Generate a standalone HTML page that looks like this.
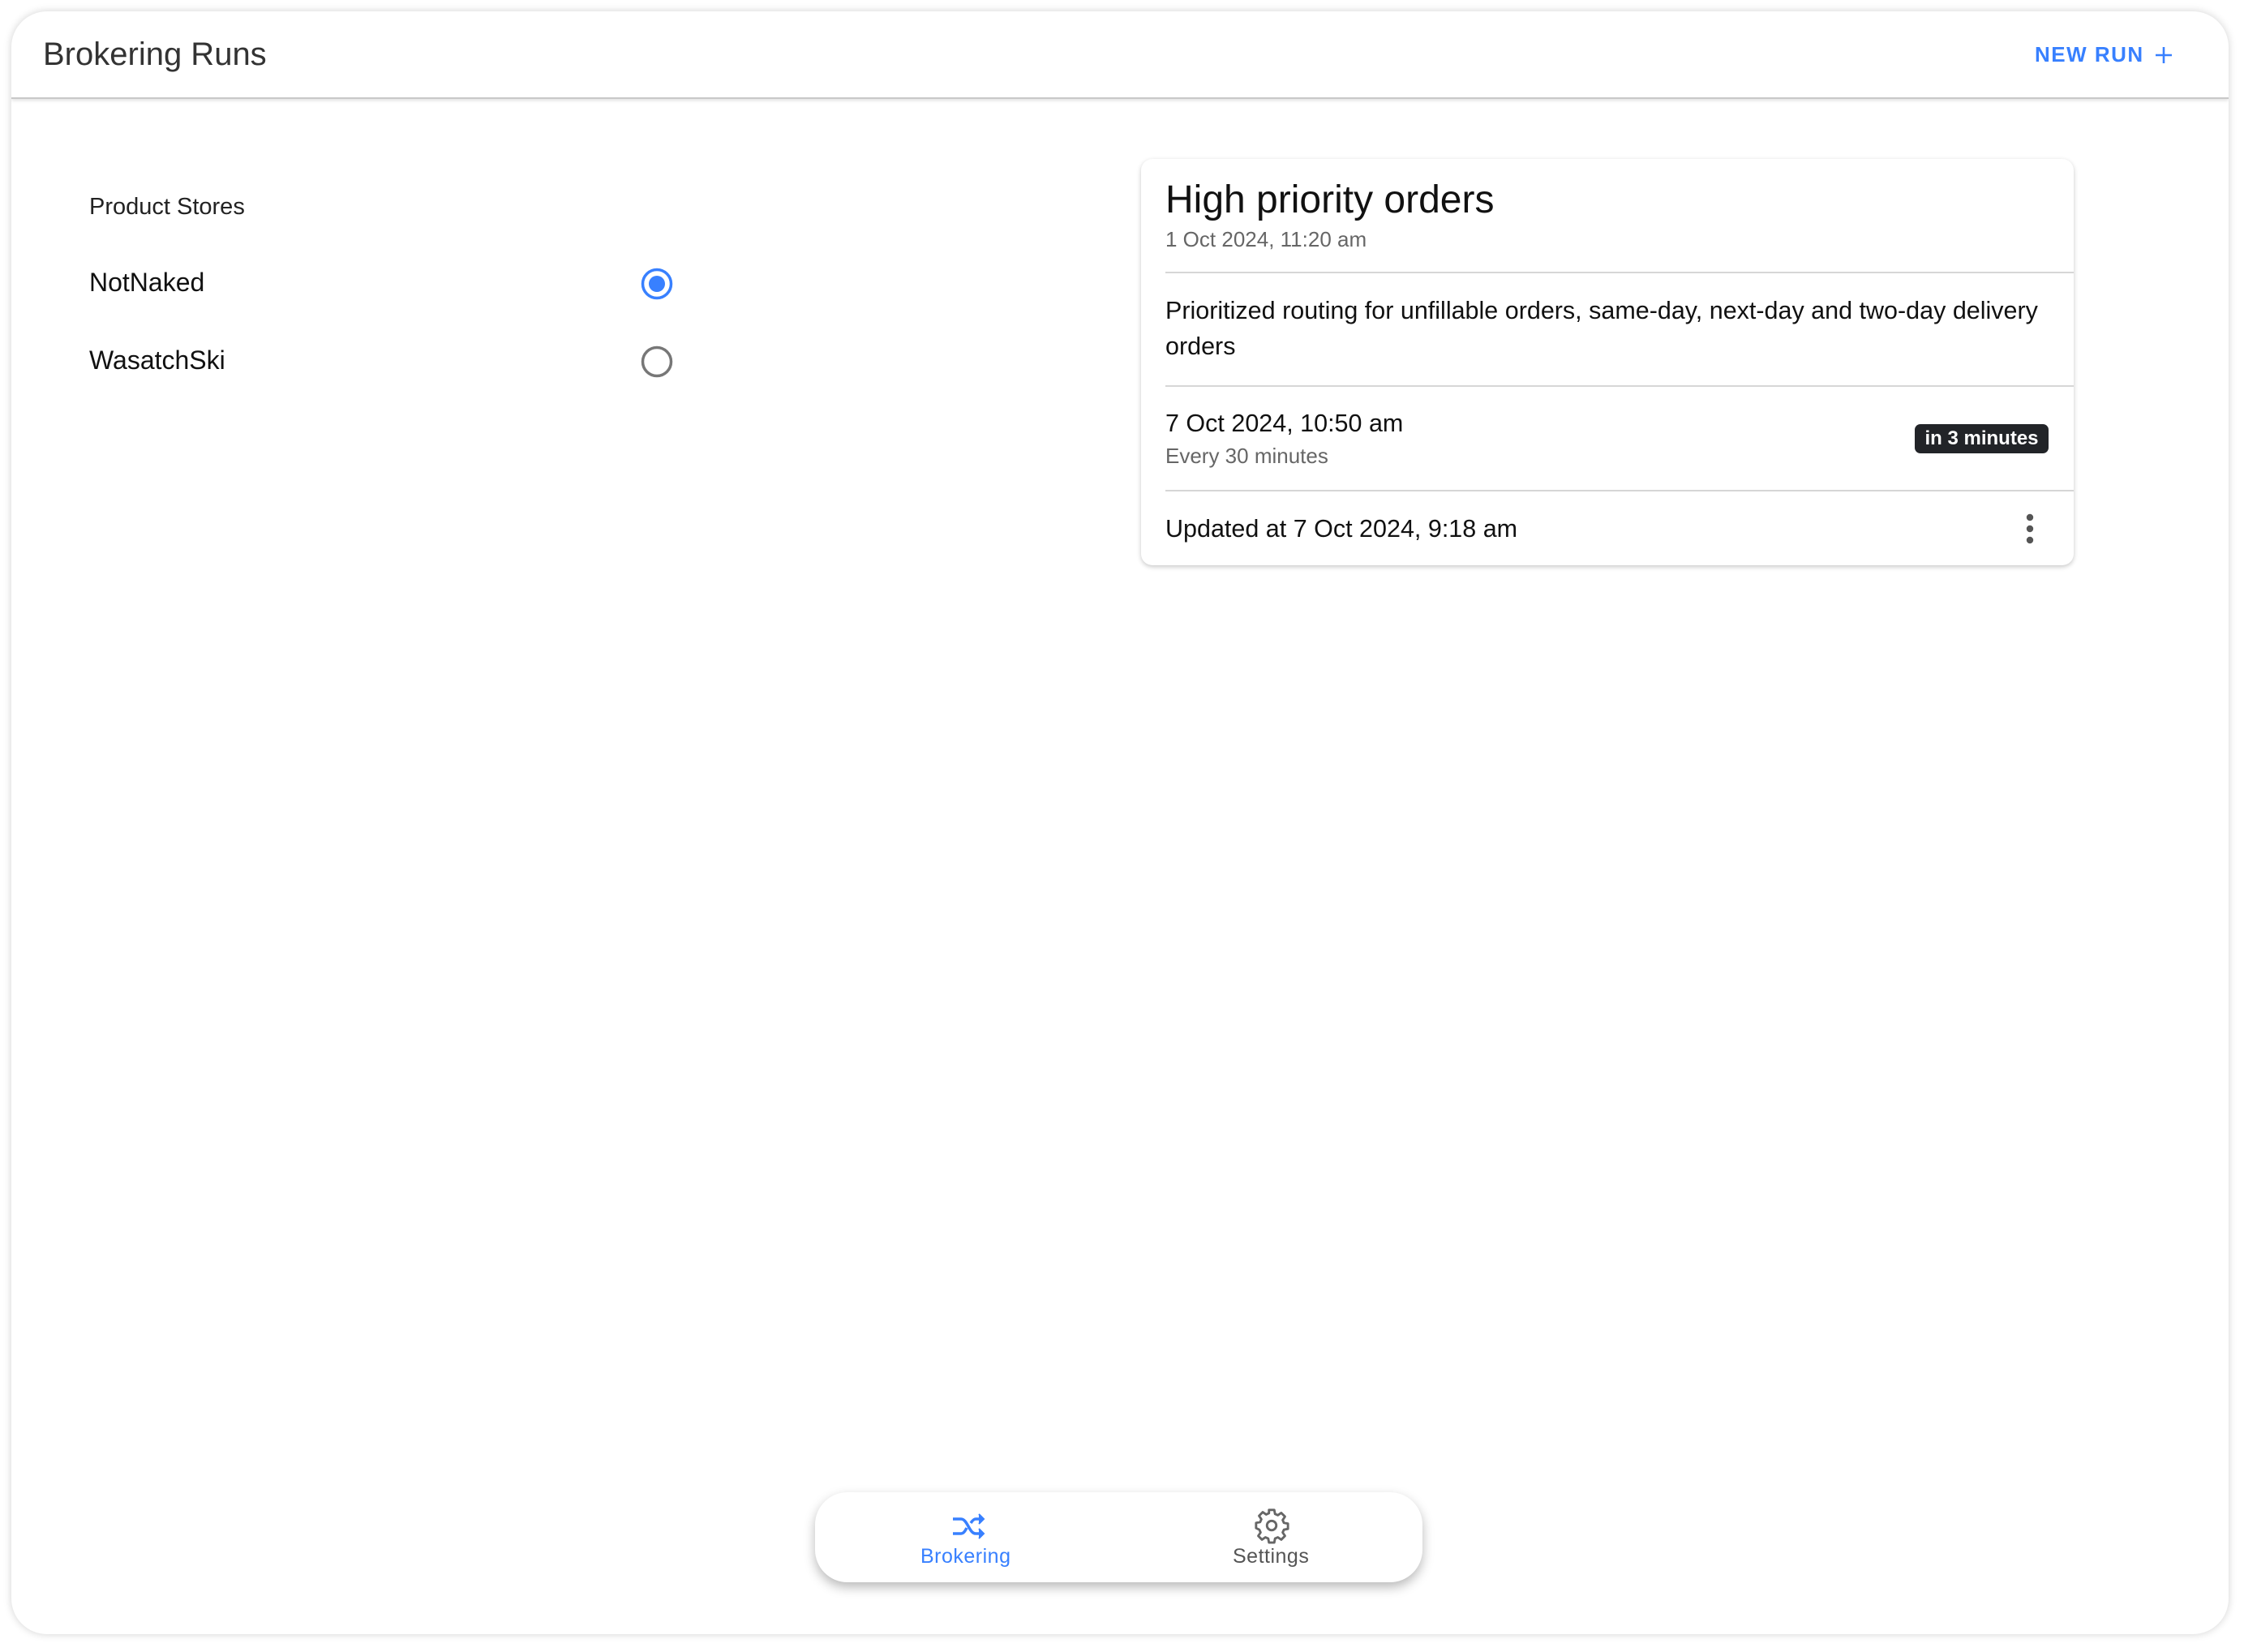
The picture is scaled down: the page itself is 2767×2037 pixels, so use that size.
<!DOCTYPE html>
<html><head><meta charset="utf-8"><style>
*{box-sizing:border-box;margin:0;padding:0}
body{width:2767px;height:2037px;background:#fff;font-family:"Liberation Sans",sans-serif;position:relative;overflow:hidden}
.frame{position:absolute;left:14px;top:14px;width:2734px;height:2001px;border-radius:44px;background:#fff;box-shadow:0 0 10px rgba(0,0,0,.18);overflow:hidden}
.hdr{position:absolute;left:0;top:0;width:100%;height:108px;border-bottom:2px solid #c8c8c8;box-shadow:0 2px 4px rgba(0,0,0,.12)}
.t{position:absolute;white-space:nowrap}
.card{position:absolute;left:1393px;top:182px;width:1150px;height:501px;border-radius:14px;background:#fff;box-shadow:0 2px 6px rgba(0,0,0,.22)}
.div{position:absolute;left:30px;right:0;height:2px;background:#d6d6d6}
.tab{position:absolute;left:991px;top:1826px;width:749px;height:111px;border-radius:40px;background:#fff;box-shadow:0 6px 14px rgba(0,0,0,.28)}
</style></head><body>
<div class="frame">
 <div class="hdr">
  <div class="t" style="left:39px;top:31px;font-size:40px;color:#333">Brokering Runs</div>
  <div class="t" style="left:2495px;top:38px;font-size:26px;color:#3880ff;font-weight:bold;letter-spacing:1.5px">NEW RUN</div>
  <svg style="position:absolute;left:2641px;top:41px" width="26" height="26" viewBox="0 0 26 26"><path d="M13 3v20M3 13h20" stroke="#3880ff" stroke-width="2.6"/></svg>
 </div>
 <div class="t" style="left:96px;top:225px;font-size:29px;color:#222">Product Stores</div>
 <div class="t" style="left:96px;top:316px;font-size:32px;color:#111">NotNaked</div>
 <div class="t" style="left:96px;top:412px;font-size:32px;color:#111">WasatchSki</div>
 <svg style="position:absolute;left:776px;top:316px" width="40" height="40"><circle cx="20" cy="20" r="17.5" fill="none" stroke="#3880ff" stroke-width="3.5"/><circle cx="20" cy="20" r="10" fill="#3880ff"/></svg>
 <svg style="position:absolute;left:776px;top:412px" width="40" height="40"><circle cx="20" cy="20" r="17.5" fill="none" stroke="#777" stroke-width="3.5"/></svg>

 <div class="card">
  <div class="t" style="left:30px;top:23px;font-size:48px;color:#111">High priority orders</div>
  <div class="t" style="left:30px;top:84px;font-size:26px;color:#666">1 Oct 2024, 11:20 am</div>
  <div class="div" style="top:139px"></div>
  <div class="t" style="left:30px;top:165px;font-size:30.5px;color:#111;line-height:44px;white-space:normal;width:1110px">Prioritized routing for unfillable orders, same-day, next-day and two-day delivery orders</div>
  <div class="div" style="top:279px"></div>
  <div class="t" style="left:30px;top:309px;font-size:30.5px;color:#111">7 Oct 2024, 10:50 am</div>
  <div class="t" style="left:30px;top:351px;font-size:26px;color:#666">Every 30 minutes</div>
  <div class="t" style="left:954px;top:327px;width:165px;height:36px;background:#222428;border-radius:7px;color:#fff;font-size:24px;font-weight:bold;text-align:center;line-height:36px">in 3 minutes</div>
  <div class="div" style="top:408px"></div>
  <div class="t" style="left:30px;top:439px;font-size:30.5px;color:#111">Updated at 7 Oct 2024, 9:18 am</div>
  <svg style="position:absolute;left:1086px;top:436px" width="20" height="40"><circle cx="10" cy="6" r="4.2" fill="#555"/><circle cx="10" cy="20" r="4.2" fill="#555"/><circle cx="10" cy="34" r="4.2" fill="#555"/></svg>
 </div>

 <div class="tab">
  <svg style="position:absolute;left:168px;top:24px" width="44" height="36" viewBox="0 0 44 36" fill="none" stroke="#3880ff" stroke-width="3.5"><path d="M2 9h10c8 0 10 18 18 18h8M2 27h10c3 0 5-3 7-7M24 14c2-3 4-5 6-5h8"/><path d="M34 3l6 6-6 6M34 21l6 6-6 6" fill="#3880ff" stroke-width="2"/></svg>
  <div class="t" style="left:130px;top:65px;font-size:25px;color:#3880ff;letter-spacing:.5px">Brokering</div>
  <svg style="position:absolute;left:540px;top:18px" width="46" height="46" viewBox="0 0 24 24" fill="none" stroke="#666" stroke-width="1.5"><circle cx="12" cy="12" r="3"/><path d="M10.3 2h3.4l.5 2.6 1.8.8 2.2-1.5 2.4 2.4-1.5 2.2.8 1.8 2.6.5v3.4l-2.6.5-.8 1.8 1.5 2.2-2.4 2.4-2.2-1.5-1.8.8-.5 2.6h-3.4l-.5-2.6-1.8-.8-2.2 1.5-2.4-2.4 1.5-2.2-.8-1.8L2 13.7v-3.4l2.6-.5.8-1.8-1.5-2.2 2.4-2.4 2.2 1.5 1.8-.8z" stroke-linejoin="round"/></svg>
  <div class="t" style="left:515px;top:65px;font-size:25px;color:#555;letter-spacing:.5px">Settings</div>
 </div>
</div>
</body></html>
